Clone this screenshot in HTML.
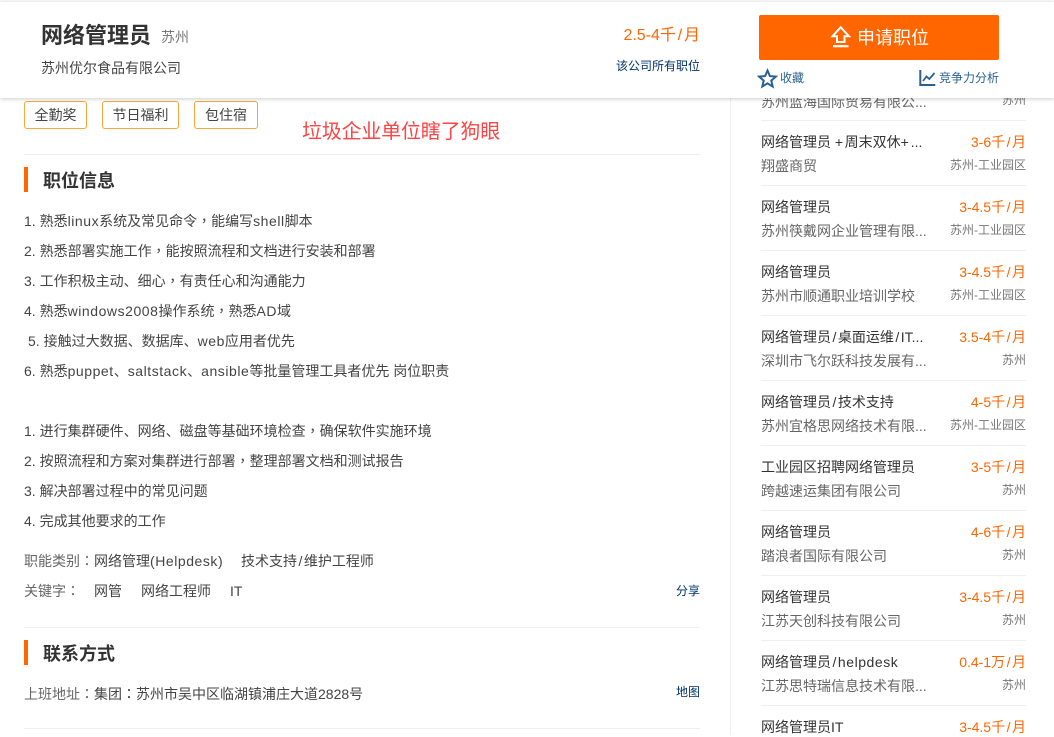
<!DOCTYPE html>
<html><head><meta charset="utf-8"><style>
html,body{margin:0;padding:0;background:#fff}
body{width:1054px;height:735px;position:relative;overflow:hidden;font-family:"Liberation Sans","Noto Sans CJK SC",sans-serif;font-size:14px;color:#444}
.a{position:absolute;white-space:nowrap;line-height:20px}
.line{position:absolute;height:1px;background:#eee}
.tag{position:absolute;top:101px;height:26px;line-height:26px;border:1px solid #f9a63a;border-radius:3px;text-align:center;color:#444;font-size:14px}
.bar{position:absolute;left:24px;width:4px;height:25px;background:#f60}
.h{position:absolute;left:43px;font-size:18px;font-weight:bold;color:#333;line-height:25px}
.t{left:761px;color:#333}.c{left:761px;color:#666}.r{right:28px;color:#777;font-size:12px}.sal{right:28px;color:#f60}
.lk{color:#036;font-size:12px}
i{font-style:normal;font-family:"Noto Sans CJK TC",sans-serif}
u{text-decoration:none;letter-spacing:.55px}
s{text-decoration:none;padding:0 1.5px}
</style></head><body>
<div class="tag" style="left:24px;width:61px">全勤奖</div>
<div class="tag" style="left:102px;width:75px">节日福利</div>
<div class="tag" style="left:194px;width:62px">包住宿</div>
<div class="a" style="left:302px;top:120px;font-size:20px;letter-spacing:-.2px;color:#f44;line-height:24px">垃圾企业单位瞎了狗眼</div>
<div class="line" style="left:24px;width:676px;top:154px"></div>
<div class="bar" style="top:167px"></div><div class="h" style="top:169px">职位信息</div>
<div class="a" style="left:24px;top:211px">1. 熟悉<u>linux</u>系统及常见命令<i lang="zh-TW">，</i>能编写<u>shell</u>脚本</div>
<div class="a" style="left:24px;top:241px">2. 熟悉部署实施工作<i lang="zh-TW">，</i>能按照流程和文档进行安装和部署</div>
<div class="a" style="left:24px;top:271px">3. 工作积极主动、细心<i lang="zh-TW">，</i>有责任心和沟通能力</div>
<div class="a" style="left:24px;top:301px">4. 熟悉<u>windows2008</u>操作系统<i lang="zh-TW">，</i>熟悉<u>AD</u>域</div>
<div class="a" style="left:28px;top:331px">5. 接触过大数据、数据库、<u>web</u>应用者优先</div>
<div class="a" style="left:24px;top:361px">6. 熟悉<u>puppet</u>、<u>saltstack</u>、<u>ansible</u>等批量管理工具者优先 岗位职责</div>
<div class="a" style="left:24px;top:421px">1. 进行集群硬件、网络、磁盘等基础环境检查<i lang="zh-TW">，</i>确保软件实施环境</div>
<div class="a" style="left:24px;top:451px">2. 按照流程和方案对集群进行部署<i lang="zh-TW">，</i>整理部署文档和测试报告</div>
<div class="a" style="left:24px;top:481px">3. 解决部署过程中的常见问题</div>
<div class="a" style="left:24px;top:511px">4. 完成其他要求的工作</div>
<div class="a" style="left:24px;top:551px"><span style="color:#666">职能类别<i lang="zh-TW">：</i></span>网络管理<u>(Helpdesk)</u></div>
<div class="a" style="left:241px;top:551px">技术支持<s>/</s>维护工程师</div>
<div class="a" style="left:24px;top:581px;color:#666">关键字<i lang="zh-TW">：</i></div>
<div class="a" style="left:94px;top:581px">网管</div><div class="a" style="left:141px;top:581px">网络工程师</div><div class="a" style="left:230px;top:581px">IT</div>
<div class="a lk" style="right:354px;top:581px">分享</div>
<div class="line" style="left:24px;width:676px;top:627px"></div>
<div class="bar" style="top:640px"></div><div class="h" style="top:642px">联系方式</div>
<div class="a" style="left:24px;top:684px"><span style="color:#666">上班地址<i lang="zh-TW">：</i></span>集团<i lang="zh-TW">：</i>苏州市吴中区临湖镇浦庄大道2828号</div>
<div class="a lk" style="right:354px;top:682px">地图</div>
<div class="line" style="left:24px;width:676px;top:728px"></div>
<div style="position:absolute;left:730px;top:98px;width:1px;height:637px;background:#eee"></div>

<div class="a c" style="top:92px">苏州蓝海国际贸易有限公...</div><div class="a r" style="top:90px">苏州</div>
<div class="line" style="left:761px;width:265px;top:120px"></div>
<div class="a t" style="top:132px">网络管理员 <u style="letter-spacing:1.5px">+</u>周末双休<u style="letter-spacing:2px">+</u>...</div><div class="a sal" style="top:132px">3-6千<s>/</s>月</div><div class="a c" style="top:156px">翔盛商贸</div><div class="a r" style="top:155px">苏州-工业园区</div>
<div class="line" style="left:761px;width:265px;top:185px"></div>
<div class="a t" style="top:197px">网络管理员</div><div class="a sal" style="top:197px">3-4.5千<s>/</s>月</div><div class="a c" style="top:221px">苏州筷戴网企业管理有限...</div><div class="a r" style="top:220px">苏州-工业园区</div>
<div class="line" style="left:761px;width:265px;top:250px"></div>
<div class="a t" style="top:262px">网络管理员</div><div class="a sal" style="top:262px">3-4.5千<s>/</s>月</div><div class="a c" style="top:286px">苏州市顺通职业培训学校</div><div class="a r" style="top:285px">苏州-工业园区</div>
<div class="line" style="left:761px;width:265px;top:315px"></div>
<div class="a t" style="top:327px">网络管理员<s>/</s>桌面运维<s>/</s>IT...</div><div class="a sal" style="top:327px">3.5-4千<s>/</s>月</div><div class="a c" style="top:351px">深圳市飞尔跃科技发展有...</div><div class="a r" style="top:350px">苏州</div>
<div class="line" style="left:761px;width:265px;top:380px"></div>
<div class="a t" style="top:392px">网络管理员<s>/</s>技术支持</div><div class="a sal" style="top:392px">4-5千<s>/</s>月</div><div class="a c" style="top:416px">苏州宜格思网络技术有限...</div><div class="a r" style="top:415px">苏州-工业园区</div>
<div class="line" style="left:761px;width:265px;top:445px"></div>
<div class="a t" style="top:457px">工业园区招聘网络管理员</div><div class="a sal" style="top:457px">3-5千<s>/</s>月</div><div class="a c" style="top:481px">跨越速运集团有限公司</div><div class="a r" style="top:480px">苏州</div>
<div class="line" style="left:761px;width:265px;top:510px"></div>
<div class="a t" style="top:522px">网络管理员</div><div class="a sal" style="top:522px">4-6千<s>/</s>月</div><div class="a c" style="top:546px">踏浪者国际有限公司</div><div class="a r" style="top:545px">苏州</div>
<div class="line" style="left:761px;width:265px;top:575px"></div>
<div class="a t" style="top:587px">网络管理员</div><div class="a sal" style="top:587px">3-4.5千<s>/</s>月</div><div class="a c" style="top:611px">江苏天创科技有限公司</div><div class="a r" style="top:610px">苏州</div>
<div class="line" style="left:761px;width:265px;top:640px"></div>
<div class="a t" style="top:652px">网络管理员<s>/</s><u>helpdesk</u></div><div class="a sal" style="top:652px">0.4-1万<s>/</s>月</div><div class="a c" style="top:676px">江苏思特瑞信息技术有限...</div><div class="a r" style="top:675px">苏州</div>
<div class="line" style="left:761px;width:265px;top:705px"></div>
<div class="a t" style="top:717px">网络管理员IT</div><div class="a sal" style="top:717px">3-4.5千<s>/</s>月</div>

<div style="position:absolute;left:0;top:1px;width:1054px;height:96px;background:#fff;border-top:1px solid #eee;box-shadow:0 1px 4px rgba(0,0,0,.2)">
<div class="a" style="left:41px;top:18px;font-size:22px;font-weight:bold;color:#333;line-height:32px">网络管理员</div>
<div class="a" style="left:161px;top:25px;color:#777">苏州</div>
<div class="a" style="left:41px;top:56px;color:#444">苏州优尔食品有限公司</div>
<div class="a" style="right:354px;top:24px;font-size:16px;color:#f60">2.5-4千<s style="padding:0 1.8px">/</s>月</div>
<div class="a lk" style="right:354px;top:54px">该公司所有职位</div>
<div style="position:absolute;left:759px;top:13px;width:240px;height:45px;background:#f60;border-radius:2px"></div>
<svg style="position:absolute;left:750px;top:18px" width="260" height="75" viewBox="750 20 260 75" fill="none">
<path d="M840.7 27.2 832.5 36.3h4.5v5.7h7.5v-5.7h4.5z" stroke="#fff" stroke-width="2"/>
<path d="M833 46.2h15.5" stroke="#fff" stroke-width="2.2"/>
<path d="M767.5 70.5l2.4 5.6 6 .5-4.6 4 1.4 5.9-5.2-3.1-5.2 3.1 1.4-5.9-4.6-4 6-.5z" stroke="#2b6190" stroke-width="2"/>
<path d="M920.3 70v15h15" stroke="#2b6190" stroke-width="2"/>
<path d="M923 81l3.5-4.5 2.8 2.5 5.2-6" stroke="#2b6190" stroke-width="1.8"/>
</svg>
<div class="a" style="left:857px;top:24px;font-size:18px;color:#fff;line-height:24px">申请职位</div>
<div class="a" style="left:780px;top:66px;font-size:12px;color:#2b6190">收藏</div>
<div class="a" style="left:939px;top:66px;font-size:12px;color:#2b6190">竞争力分析</div>
</div>
</body></html>
